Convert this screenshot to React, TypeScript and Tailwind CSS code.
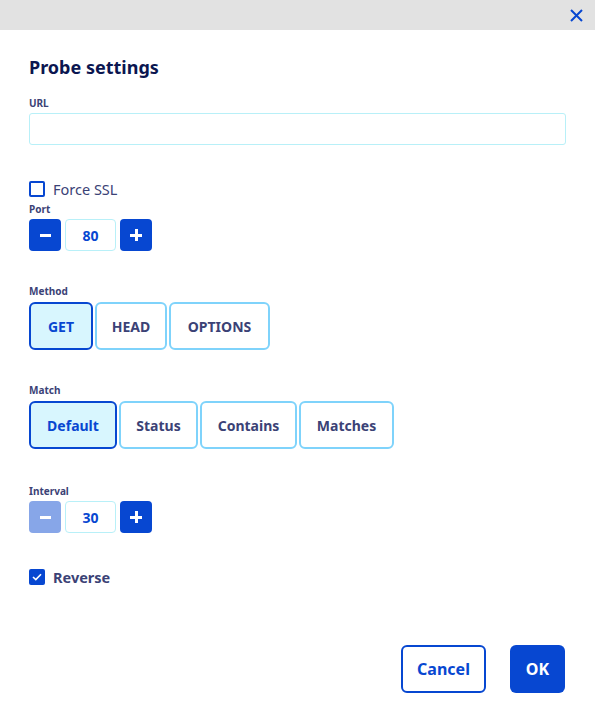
import { useState } from "react";

const font = { fontFamily: "'Noto Sans', Lato, sans-serif" };

function Label({ children }: { children: React.ReactNode }) {
  return <div className="text-[10px] font-bold leading-[12px] text-[#3b4276]">{children}</div>;
}

function Stepper({ value, min }: { value: number; min?: boolean }) {
  return (
    <div className="mt-[4px] flex gap-[4px]">
      <button
        className={`flex h-[32px] w-[32px] items-center justify-center rounded-[4px] ${
          min ? "bg-[#87a6e8]" : "bg-[#0747d1]"
        }`}
      >
        <span className="block h-[3px] w-[11px] bg-white" />
      </button>
      <div className="flex h-[32px] w-[51px] items-center justify-center rounded-[4px] border border-[#b8f0f8] text-[14px] font-bold text-[#0747d1]">
        {value}
      </div>
      <button className="relative flex h-[32px] w-[32px] items-center justify-center rounded-[4px] bg-[#0747d1]">
        <span className="block h-[3px] w-[12px] bg-white" />
        <span className="absolute h-[12px] w-[3px] bg-white" />
      </button>
    </div>
  );
}

function Toggle({ options, widths, active }: { options: string[]; widths: string[]; active: number }) {
  return (
    <div className="mt-[5px] flex gap-[2px]">
      {options.map((o, i) => (
        <button
          key={o}
          className={`flex h-[48px] items-center justify-center rounded-[6px] border-2 text-[14px] font-bold ${widths[i]} ${
            i === active
              ? "border-[#0747d1] bg-[#d8f6fe] text-[#0747d1]"
              : "border-[#7fd3fb] bg-white text-[#3b4276]"
          }`}
        >
          {o}
        </button>
      ))}
    </div>
  );
}

export default function App() {
  const [url, setUrl] = useState("");
  return (
    <div className="h-[716px] w-[595px] bg-white" style={font}>
      <div className="flex h-[30px] items-center justify-end bg-[#e2e2e2] pr-[12px]">
        <svg width="13" height="13" viewBox="0 0 13 13" fill="none">
          <path d="M1 1L12 12M12 1L1 12" stroke="#0747d1" strokeWidth="2" />
        </svg>
      </div>
      <div className="px-[29px]">
        <h1 className="mt-[25px] text-[18px] font-bold leading-[24px] text-[#0b1650]">Probe settings</h1>
        <div className="mt-[18px]">
          <Label>URL</Label>
        </div>
        <input
          value={url}
          onChange={(e) => setUrl(e.target.value)}
          className="mt-[4px] block h-[32px] w-full rounded-[3px] border-[1.5px] border-[#b8f0f8] px-2 text-[14px] outline-none"
        />
        <label className="mt-[36px] flex items-center gap-[8px]">
          <span className="block h-[16px] w-[16px] rounded-[2px] border-2 border-[#0747d1]" />
          <span className="text-[14.5px] leading-[16px] text-[#3b4276]">Force SSL</span>
        </label>
        <div className="mt-[6px]">
          <Label>Port</Label>
        </div>
        <Stepper value={80} />
        <div className="mt-[34px]">
          <Label>Method</Label>
        </div>
        <Toggle options={["GET", "HEAD", "OPTIONS"]} widths={["w-[64px]", "w-[72px]", "w-[101px]"]} active={0} />
        <div className="mt-[34px]">
          <Label>Match</Label>
        </div>
        <Toggle
          options={["Default", "Status", "Contains", "Matches"]}
          widths={["w-[88px]", "w-[79px]", "w-[97px]", "w-[95px]"]}
          active={0}
        />
        <div className="mt-[36px]">
          <Label>Interval</Label>
        </div>
        <Stepper value={30} min />
        <label className="mt-[36px] flex items-center gap-[8px]">
          <span className="flex h-[16px] w-[16px] items-center justify-center rounded-[2px] bg-[#0747d1]">
            <svg width="10" height="8" viewBox="0 0 10 8" fill="none">
              <path d="M1 4L3.8 6.6L9 1.2" stroke="white" strokeWidth="1.6" />
            </svg>
          </span>
          <span className="text-[14.5px] font-bold leading-[16px] text-[#3b4276]">Reverse</span>
        </label>
        <div className="mt-[60px] flex justify-end gap-[24px] pr-[1px]">
          <button className="h-[48px] w-[85px] rounded-[6px] border-2 border-[#0747d1] text-[16px] font-bold text-[#0747d1]">
            Cancel
          </button>
          <button className="h-[48px] w-[55px] rounded-[6px] bg-[#0747d1] text-[16px] font-bold text-white">OK</button>
        </div>
      </div>
    </div>
  );
}
